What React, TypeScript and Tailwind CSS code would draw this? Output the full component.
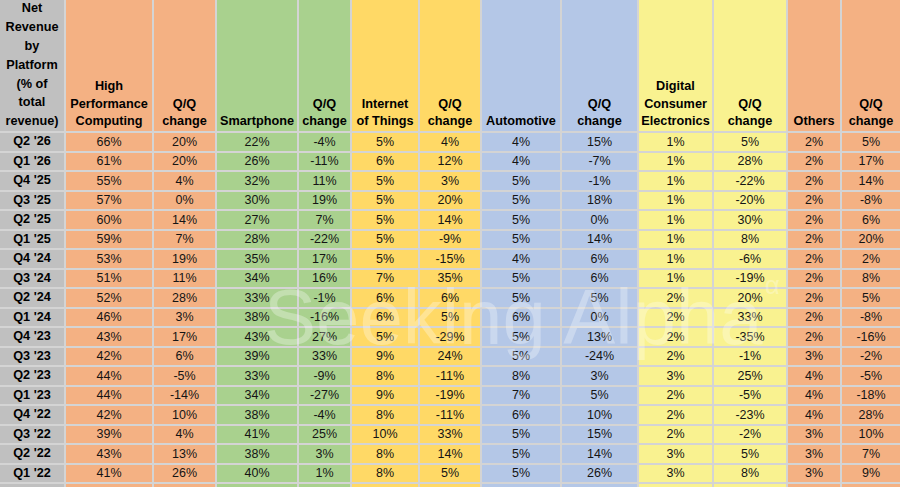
const colColors = [
  'bg-[#c0c0c0]',
  'bg-[#f4b183]',
  'bg-[#f4b183]',
  'bg-[#a9d18e]',
  'bg-[#a9d18e]',
  'bg-[#ffd966]',
  'bg-[#ffd966]',
  'bg-[#b4c7e7]',
  'bg-[#b4c7e7]',
  'bg-[#f9f290]',
  'bg-[#f9f290]',
  'bg-[#f4b183]',
  'bg-[#f4b183]',
];

const headers: string[][] = [
  ['Net', 'Revenue', 'by', 'Platform', '(% of', 'total', 'revenue)'],
  ['High', 'Performance', 'Computing'],
  ['Q/Q', 'change'],
  ['Smartphone'],
  ['Q/Q', 'change'],
  ['Internet', 'of Things'],
  ['Q/Q', 'change'],
  ['Automotive'],
  ['Q/Q', 'change'],
  ['Digital', 'Consumer', 'Electronics'],
  ['Q/Q', 'change'],
  ['Others'],
  ['Q/Q', 'change'],
];

const rows: string[][] = [
  ["Q2 '26", '66%', '20%', '22%', '-4%', '5%', '4%', '4%', '15%', '1%', '5%', '2%', '5%'],
  ["Q1 '26", '61%', '20%', '26%', '-11%', '6%', '12%', '4%', '-7%', '1%', '28%', '2%', '17%'],
  ["Q4 '25", '55%', '4%', '32%', '11%', '5%', '3%', '5%', '-1%', '1%', '-22%', '2%', '14%'],
  ["Q3 '25", '57%', '0%', '30%', '19%', '5%', '20%', '5%', '18%', '1%', '-20%', '2%', '-8%'],
  ["Q2 '25", '60%', '14%', '27%', '7%', '5%', '14%', '5%', '0%', '1%', '30%', '2%', '6%'],
  ["Q1 '25", '59%', '7%', '28%', '-22%', '5%', '-9%', '5%', '14%', '1%', '8%', '2%', '20%'],
  ["Q4 '24", '53%', '19%', '35%', '17%', '5%', '-15%', '4%', '6%', '1%', '-6%', '2%', '2%'],
  ["Q3 '24", '51%', '11%', '34%', '16%', '7%', '35%', '5%', '6%', '1%', '-19%', '2%', '8%'],
  ["Q2 '24", '52%', '28%', '33%', '-1%', '6%', '6%', '5%', '5%', '2%', '20%', '2%', '5%'],
  ["Q1 '24", '46%', '3%', '38%', '-16%', '6%', '5%', '6%', '0%', '2%', '33%', '2%', '-8%'],
  ["Q4 '23", '43%', '17%', '43%', '27%', '5%', '-29%', '5%', '13%', '2%', '-35%', '2%', '-16%'],
  ["Q3 '23", '42%', '6%', '39%', '33%', '9%', '24%', '5%', '-24%', '2%', '-1%', '3%', '-2%'],
  ["Q2 '23", '44%', '-5%', '33%', '-9%', '8%', '-11%', '8%', '3%', '3%', '25%', '4%', '-5%'],
  ["Q1 '23", '44%', '-14%', '34%', '-27%', '9%', '-19%', '7%', '5%', '2%', '-5%', '4%', '-18%'],
  ["Q4 '22", '42%', '10%', '38%', '-4%', '8%', '-11%', '6%', '10%', '2%', '-23%', '4%', '28%'],
  ["Q3 '22", '39%', '4%', '41%', '25%', '10%', '33%', '5%', '15%', '2%', '-2%', '3%', '10%'],
  ["Q2 '22", '43%', '13%', '38%', '3%', '8%', '14%', '5%', '14%', '3%', '5%', '3%', '7%'],
  ["Q1 '22", '41%', '26%', '40%', '1%', '8%', '5%', '5%', '26%', '3%', '8%', '3%', '9%'],
  ['', '', '', '', '', '', '', '', '', '', '', '', ''],
];

export default function App() {
  return (
    <div className="relative h-[487px] w-[900px] overflow-hidden bg-[#d4d4d4] font-['Liberation_Sans',Arial,sans-serif] text-[#141414]">
      <div className="grid grid-cols-[64px_86px_61px_80px_51px_66px_60px_78px_75px_73px_72px_52px_58px] grid-rows-[131px_repeat(19,17.5px)] gap-[2px]">
        {headers.map((lines, i) => (
          <div
            key={`h${i}`}
            className={`flex flex-col items-center justify-end text-center text-[12.7px] font-bold text-black ${colColors[i]} ${
              i === 0 ? 'leading-[18.8px] pt-[2px]' : 'leading-[17.2px] pb-[1px]'
            }`}
          >
            {lines.map((l) => (
              <span key={l} className="whitespace-nowrap">
                {l}
              </span>
            ))}
          </div>
        ))}
        {rows.map((row, r) =>
          row.map((v, c) => (
            <div
              key={`${r}-${c}`}
              className={`flex items-center justify-center whitespace-nowrap leading-none ${colColors[c]} ${
                c === 0 ? 'text-[12.7px] font-bold text-black' : 'text-[12.5px]'
              }`}
            >
              {v}
            </div>
          )),
        )}
      </div>

      {/* watermark */}
      <div className="pointer-events-none absolute left-[264px] top-[278px] flex items-start text-white/30">
        <span className="whitespace-nowrap text-[78px] leading-none">Seeking Alpha</span>
        <span className="ml-[2px] mt-[-6px] text-[26px] leading-none">α</span>
      </div>
    </div>
  );
}
